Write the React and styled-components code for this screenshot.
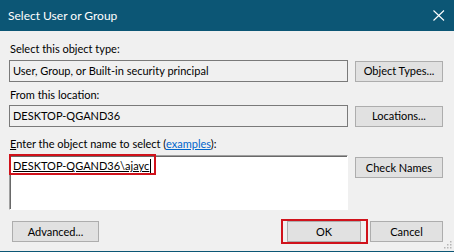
import React from "react";
import styled, { createGlobalStyle } from "styled-components";

const GlobalStyle = createGlobalStyle`
  html, body {
    margin: 0;
    padding: 0;
    background: #f0f0f0;
  }
  body {
    font-family: Lato, "Liberation Sans", sans-serif;
    font-size: 11px;
    color: #000;
  }
`;

const Window = styled.div`
  position: relative;
  width: 454px;
  height: 252px;
  box-sizing: border-box;
  display: flex;
  flex-direction: column;
  background: #f0f0f0;
  border-bottom: 1px solid #0c5675;
  overflow: hidden;
`;

const TitleBar = styled.div`
  height: 31px;
  flex: none;
  display: flex;
  align-items: center;
  justify-content: space-between;
  padding: 0 9px 0 8px;
  background: #0c5675;
  color: #fff;
  font-size: 12px;
  line-height: 16px;
`;

const CloseIcon = styled.svg`
  display: block;
`;

const Body = styled.div`
  flex: 1;
  padding: 10px 11px 0 9px;
  display: flex;
  flex-direction: column;
`;

const Label = styled.div`
  line-height: 16px;
  height: 16px;
  padding-left: 1px;
  margin-top: ${(p) => p.$top || 0}px;
  margin-bottom: ${(p) => p.$bottom || 2}px;
  white-space: nowrap;
`;

const AccessKey = styled.span`
  text-decoration: underline;
`;

const Link = styled.span`
  color: #0066cc;
  text-decoration: underline;
`;

const Row = styled.div`
  display: grid;
  grid-template-columns: 1fr 88px;
  column-gap: 7px;
  align-items: ${(p) => (p.$top ? "start" : "center")};
`;

const ReadOnlyBox = styled.div`
  height: 22px;
  box-sizing: border-box;
  border: 1px solid #7a7a7a;
  background: #f0f0f0;
  padding: 0 3px;
  line-height: 20px;
  white-space: nowrap;
`;

const NameBox = styled.div`
  height: 55px;
  box-sizing: border-box;
  border-top: 1px solid #a0a0a0;
  border-left: 1px solid #a0a0a0;
  border-right: 1px solid #fff;
  border-bottom: 1px solid #fff;
  box-shadow: inset 1px 1px 0 #696969;
  background: #fff;
  padding: 1px 3px 0 3px;
`;

const NameText = styled.span`
  display: inline-block;
  line-height: 18px;
  text-decoration: underline;
  white-space: nowrap;
`;

const Caret = styled.span`
  display: inline-block;
  width: 1px;
  height: 14px;
  margin-left: 1px;
  vertical-align: -3px;
  background: #000;
`;

const Button = styled.div`
  height: 21px;
  width: ${(p) => (p.$w ? `${p.$w}px` : "auto")};
  margin-top: ${(p) => p.$mt || 0}px;
  box-sizing: border-box;
  border: 1px solid #adadad;
  background: #e1e1e1;
  display: flex;
  align-items: center;
  justify-content: center;
  line-height: 16px;
  white-space: nowrap;
`;

const Footer = styled.div`
  display: flex;
  align-items: center;
  margin-top: 11px;
  padding-left: 3px;
`;

const FooterRight = styled.div`
  margin-left: auto;
  display: flex;
  gap: 9px;
`;

const Highlight = styled.div`
  position: absolute;
  box-sizing: border-box;
  border: 2px solid #d0121b;
  pointer-events: none;
`;

const Grip = styled.svg`
  position: absolute;
  right: 2px;
  bottom: 2px;
`;

export default function App() {
  return (
    <>
      <GlobalStyle />
      <Window>
        <TitleBar>
          <span>Select User or Group</span>
          <CloseIcon width="12" height="11" viewBox="0 0 12 11">
            <path d="M0.5 0.5 L11 10.5 M11 0.5 L0.5 10.5" stroke="#fff" strokeWidth="1.1" fill="none" />
          </CloseIcon>
        </TitleBar>
        <Body>
          <Label $bottom={3}>Select this object type:</Label>
          <Row>
            <ReadOnlyBox>User, Group, or Built-in security principal</ReadOnlyBox>
            <Button>Object Types...</Button>
          </Row>
          <Label $top={5} $bottom={2}>From this location:</Label>
          <Row>
            <ReadOnlyBox>DESKTOP-QGAND36</ReadOnlyBox>
            <Button>Locations...</Button>
          </Row>
          <Label $top={9} $bottom={3}>
            <AccessKey>E</AccessKey>nter the object name to select (<Link>examples</Link>):
          </Label>
          <Row $top>
            <NameBox>
              <NameText>DESKTOP-QGAND36\ajayc</NameText>
              <Caret />
            </NameBox>
            <Button $mt={2}>Check Names</Button>
          </Row>
          <Footer>
            <Button $w={87}>Advanced...</Button>
            <FooterRight>
              <Button $w={74}>OK</Button>
              <Button $w={73}>Cancel</Button>
            </FooterRight>
          </Footer>
        </Body>
        <Highlight style={{ left: 9, top: 154, width: 147, height: 21 }} />
        <Highlight style={{ left: 281, top: 219, width: 87, height: 25 }} />
        <Grip width="9" height="9" viewBox="0 0 9 9">
          {[[7, 1], [4, 4], [7, 4], [1, 7], [4, 7], [7, 7]].map(([x, y]) => (
            <rect key={`${x}-${y}`} x={x} y={y} width="1.5" height="1.5" fill="#b5b5b5" />
          ))}
        </Grip>
      </Window>
    </>
  );
}
